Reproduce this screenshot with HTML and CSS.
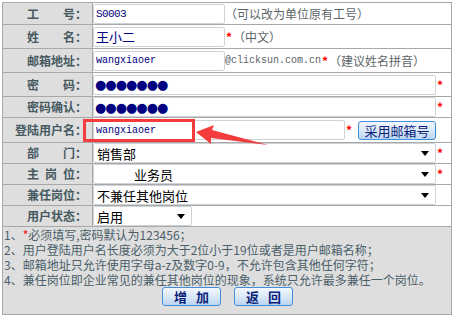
FILE: index.html
```html
<!DOCTYPE html>
<html lang="zh-CN">
<head>
    <meta charset="UTF-8">
    <title>添加用户</title>
    <link rel="stylesheet" href="styles.css">
</head>
<body>
    <div class="panel">
        <table class="form-table">
            <tr class="r1">
                <th>工&emsp;&emsp;号：</th>
                <td><input class="txt short code" type="text" value="S0003"><span class="hint">（可以改为单位原有工号）</span></td>
            </tr>
            <tr class="r2">
                <th>姓&emsp;&emsp;名：</th>
                <td><input class="txt short name" type="text" value="王小二"><span class="req">*</span><span class="hint">（中文）</span></td>
            </tr>
            <tr class="r2">
                <th>邮箱地址：</th>
                <td><input class="txt short mono" type="text" value="wangxiaoer"><span class="mail">@clicksun.com.cn</span><span class="req">*</span><span class="hint">（建议姓名拼音）</span></td>
            </tr>
            <tr class="r2">
                <th>密&emsp;&emsp;码：</th>
                <td><input class="txt long pwd" type="text" value="●●●●●●●"><span class="req">*</span></td>
            </tr>
            <tr class="r3">
                <th>密码确认：</th>
                <td><input class="txt long pwd" type="text" value="●●●●●●●"><span class="req">*</span></td>
            </tr>
            <tr class="r4">
                <th>登陆用户名：</th>
                <td><input class="txt login mono" type="text" value="wangxiaoer"><span class="req">*</span><button class="btn mailbtn" type="button">采用邮箱号</button></td>
            </tr>
            <tr class="r3">
                <th>部&emsp;&emsp;门：</th>
                <td><span class="sel long"><select><option>销售部</option></select></span><span class="req">*</span></td>
            </tr>
            <tr class="r5">
                <th>主&ensp;岗&ensp;位：</th>
                <td><span class="sel long"><select class="indent"><option>业务员</option></select></span><span class="req">*</span></td>
            </tr>
            <tr class="r5">
                <th>兼任岗位：</th>
                <td><span class="sel long"><select><option>不兼任其他岗位</option></select></span></td>
            </tr>
            <tr class="r5">
                <th>用户状态：</th>
                <td><span class="sel small"><select><option>启用</option></select></span></td>
            </tr>
            <tr>
                <td class="notes" colspan="2">
                    <p>1、<span class="star">*</span>必须填写,密码默认为123456；</p>
                    <p>2、用户登陆用户名长度必须为大于2位小于19位或者是用户邮箱名称；</p>
                    <p>3、邮箱地址只允许使用字母a-z及数字0-9，不允许包含其他任何字符；</p>
                    <p>4、兼任岗位即企业常见的兼任其他岗位的现象，系统只允许最多兼任一个岗位。</p>
                    <div class="actions">
                        <button class="btn act" type="button">增 加</button>
                        <button class="btn act" type="button">返 回</button>
                    </div>
                </td>
            </tr>
        </table>

        <!-- 标注：红框 + 箭头 -->
        <div class="mark-box"></div>
        <svg class="mark-arrow" width="80" height="30" viewBox="0 0 80 30">
            <polygon points="6,12 24,5 22,10 78,25 21,18 21,24" fill="#f43c3c"/>
        </svg>
    </div>
</body>
</html>
```

FILE: styles.css
```css
body {
    margin: 0;
    background: #fff;
    font-family: "Noto Sans CJK SC", "Liberation Sans", sans-serif;
    font-size: 12px;
}
.panel {
    position: relative;
    padding: 2px 0 0 2px;
    width: 450px;
}
.form-table {
    width: 450px;
    border-collapse: collapse;
    border: 1px solid #a4a4a4;
}
.form-table th,
.form-table td {
    border: 1px solid #a8a8a8;
    padding: 0;
    vertical-align: middle;
}
.form-table th {
    width: 84px;
    background: #dedede;
    color: #46595e;
    font-weight: bold;
    font-size: 12px;
    text-align: right;
    padding-right: 5px;
    white-space: nowrap;
    line-height: 14px;
}
.form-table td {
    background: #fff;
    white-space: nowrap;
    line-height: 14px;
}
.r1 { height: 22px; }
.r2 { height: 24px; }
.r3 { height: 20px; }
.r4 { height: 25px; }
.r5 { height: 21px; }

.txt {
    box-sizing: border-box;
    height: 20px;
    margin: 0;
    padding: 0 2px;
    border: 1px solid #cfd3d8;
    border-radius: 2px;
    color: #000080;
    font-family: "Noto Sans CJK SC", sans-serif;
    font-size: 13px;
    vertical-align: middle;
    outline: none;
}
.short { width: 132px; }
.long { width: 343px; }
.login { width: 252px; }
.code {
    font-family: "Liberation Mono", monospace;
    font-size: 11px;
    letter-spacing: -0.6px;
}
.mono {
    font-family: "Liberation Mono", monospace;
    font-size: 10px;
}
.pwd {
    font-family: "DejaVu Sans", sans-serif;
    font-size: 13px;
    letter-spacing: -1px;
    padding-left: 1px;
}
.hint {
    color: #5c6668;
    font-size: 12px;
    vertical-align: middle;
}
.mail {
    color: #5c6668;
    font-family: "Liberation Mono", monospace;
    font-size: 10px;
    vertical-align: middle;
}
.req {
    color: #f00;
    font-weight: bold;
    font-size: 12px;
    vertical-align: middle;
    padding: 0 1px;
}
.star {
    color: #f00;
}

.sel {
    position: relative;
    display: inline-block;
    vertical-align: middle;
}
.sel select {
    box-sizing: border-box;
    width: 100%;
    height: 20px;
    margin: 0;
    padding: 0 0 0 3px;
    border: 1px solid #cfd3d8;
    border-radius: 2px;
    background: #fff;
    color: #000;
    font-family: "Noto Sans CJK SC", sans-serif;
    font-size: 13px;
    -webkit-appearance: none;
    appearance: none;
    outline: none;
}
.sel select.indent { padding-left: 40px; }
.sel::after {
    content: "";
    position: absolute;
    right: 7px;
    top: 8px;
    border-left: 4px solid transparent;
    border-right: 4px solid transparent;
    border-top: 5px solid #000;
}
.sel.small { width: 99px; }

.btn {
    box-sizing: border-box;
    margin: 0;
    border: 1px solid #3f8fdc;
    border-radius: 3px;
    background: linear-gradient(#f3f8fe, #d9e8f8 50%, #bcd5f0);
    color: #0a1f7a;
    font-family: "Noto Sans CJK SC", sans-serif;
    font-size: 13px;
    line-height: 15px;
    cursor: pointer;
    vertical-align: middle;
}
.mailbtn {
    width: 78px;
    height: 19px;
    padding: 0;
    margin-left: 5px;
}

.form-table td.notes {
    background: #dedede;
    color: #4b5f6a;
    font-size: 12px;
    line-height: 15px;
    padding: 0 0 8px 1px;
    vertical-align: top;
}
.notes p {
    margin: 0;
}
.actions {
    display: flex;
    justify-content: center;
    gap: 13px;
}
.act {
    width: 59px;
    height: 19px;
    padding: 0;
    font-weight: bold;
    letter-spacing: 3px;
    text-indent: 3px;
}

.mark-box {
    position: absolute;
    left: 83px;
    top: 119px;
    width: 106px;
    height: 17px;
    border: 3px solid #f43c3c;
}
.mark-arrow {
    position: absolute;
    left: 190px;
    top: 120px;
}
```
